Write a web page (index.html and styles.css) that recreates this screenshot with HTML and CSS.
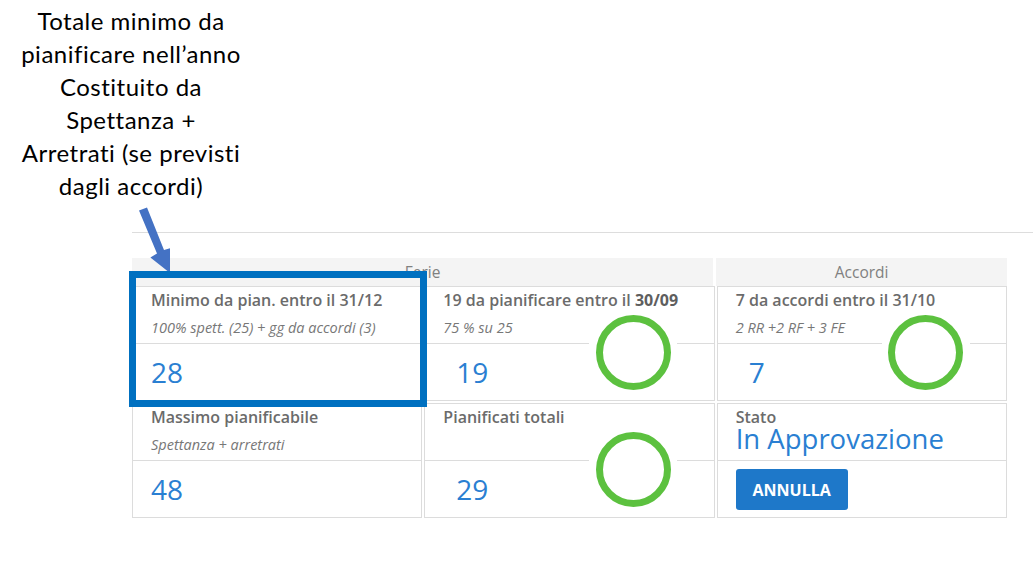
FILE: index.html
```html
<!DOCTYPE html>
<html lang="it">
<head>
<meta charset="utf-8">
<title>Ferie</title>
<link rel="stylesheet" href="styles.css">
</head>
<body>
<div class="slide">
  <div class="note">Totale minimo da<br>pianificare nell’anno<br>Costituito da<br>Spettanza +<br>Arretrati (se previsti<br>dagli accordi)</div>
  <svg class="arrow" width="40" height="80" viewBox="130 200 40 80">
    <polygon points="139,210.5 147,207.5 164,250 172.5,247.5 170,273 150.4,257.4 157,253.5" fill="#4472c4"/>
  </svg>

  <section class="panel">
    <div class="heads">
      <div class="head">Ferie</div>
      <div class="head">Accordi</div>
    </div>
    <div class="cells">
      <div class="cell">
        <div class="cell-top">
          <div class="title">Minimo da pian. entro il 31/12</div>
          <div class="sub">100% spett. (25) + gg da accordi (3)</div>
        </div>
        <div class="cell-val">28</div>
      </div>

      <div class="cell">
        <div class="cell-top">
          <div class="title">19 da pianificare entro il <b>30/09</b></div>
          <div class="sub">75 % su 25</div>
        </div>
        <div class="cell-val cell-val-chart">19</div>
        <div class="ring"><svg width="75" height="75" viewBox="0 0 75 75"><circle cx="37.5" cy="37.5" r="34" fill="none" stroke="#5cc13f" stroke-width="7"/></svg></div>
      </div>

      <div class="cell">
        <div class="cell-top">
          <div class="title">7 da accordi entro il 31/10</div>
          <div class="sub">2 RR +2 RF + 3 FE</div>
        </div>
        <div class="cell-val cell-val-chart">7</div>
        <div class="ring"><svg width="75" height="75" viewBox="0 0 75 75"><circle cx="37.5" cy="37.5" r="34" fill="none" stroke="#5cc13f" stroke-width="7"/></svg></div>
      </div>

      <div class="cell">
        <div class="cell-top">
          <div class="title">Massimo pianificabile</div>
          <div class="sub">Spettanza + arretrati</div>
        </div>
        <div class="cell-val">48</div>
      </div>

      <div class="cell">
        <div class="cell-top">
          <div class="title">Pianificati totali</div>
        </div>
        <div class="cell-val cell-val-chart">29</div>
        <div class="ring"><svg width="75" height="75" viewBox="0 0 75 75"><circle cx="37.5" cy="37.5" r="34" fill="none" stroke="#5cc13f" stroke-width="7"/></svg></div>
      </div>

      <div class="cell">
        <div class="cell-top">
          <div class="title">Stato</div>
          <div class="status">In Approvazione</div>
        </div>
        <div class="cell-val">
          <button class="btn" type="button">ANNULLA</button>
        </div>
      </div>
    </div>
  </section>

  <div class="highlight"></div>
</div>
</body>
</html>
```

FILE: styles.css
```css
* { box-sizing: border-box; }

html, body {
  margin: 0;
  padding: 0;
  background: #ffffff;
}

.slide {
  position: relative;
  width: 1033px;
  height: 565px;
  overflow: hidden;
  font-family: "Open Sans", "Liberation Sans", sans-serif;
}

.note {
  position: absolute;
  left: 0;
  top: 4px;
  width: 262px;
  text-align: center;
  font-family: Lato, "Liberation Sans", sans-serif;
  font-size: 24px;
  letter-spacing: 0.5px;
  line-height: 33px;
  color: #000000;
}

.arrow {
  position: absolute;
  left: 130px;
  top: 200px;
}

.panel {
  margin: 232px 0 0 132px;
  border-top: 1px solid #dddddd;
  padding-top: 25px;
}

.heads {
  display: grid;
  grid-template-columns: 2fr 1fr;
  column-gap: 3px;
  width: 875px;
}

.head {
  height: 28px;
  background: #f4f4f4;
  color: #808080;
  font-size: 15.5px;
  line-height: 28px;
  text-align: center;
}

.cells {
  display: grid;
  grid-template-columns: repeat(3, 1fr);
  grid-template-rows: 115px 115px;
  gap: 2px;
  width: 875px;
}

.cell {
  position: relative;
  display: flex;
  flex-direction: column;
  border: 1px solid #dcdcdc;
  background: #ffffff;
}

.cell-top {
  height: 57px;
  padding: 2px 18px 0;
  border-bottom: 1px solid #dcdcdc;
}

.title {
  font-size: 16px;
  line-height: 22px;
  font-weight: 600;
  color: #6b6b6b;
  white-space: nowrap;
}

.title b {
  font-weight: 700;
  color: #5e5e5e;
}

.sub {
  margin-top: 7px;
  font-size: 14.5px;
  line-height: 20px;
  font-style: italic;
  color: #777777;
  white-space: nowrap;
}

.status {
  font-size: 27.5px;
  line-height: 22px;
  color: #2a7fd2;
  white-space: nowrap;
}

.cell-val {
  flex: 1;
  display: flex;
  align-items: center;
  padding-left: 18px;
  font-size: 28px;
  color: #2a7fd2;
}

.cell-val-chart {
  padding-left: 31px;
}

.ring {
  position: absolute;
  left: 164px;
  top: 21px;
  width: 88px;
  height: 88px;
  display: flex;
  align-items: center;
  justify-content: center;
  background: #ffffff;
}

.ring svg { display: block; }

.btn {
  width: 112px;
  height: 41px;
  margin-top: 1px;
  border: 0;
  border-radius: 3px;
  background: #1e78c9;
  color: #ffffff;
  font-family: "Open Sans", "Liberation Sans", sans-serif;
  font-size: 16px;
  font-weight: 700;
  padding: 0;
}

.highlight {
  position: absolute;
  left: 129px;
  top: 271px;
  width: 298px;
  height: 136px;
  border: 7px solid #0070c0;
}
```
